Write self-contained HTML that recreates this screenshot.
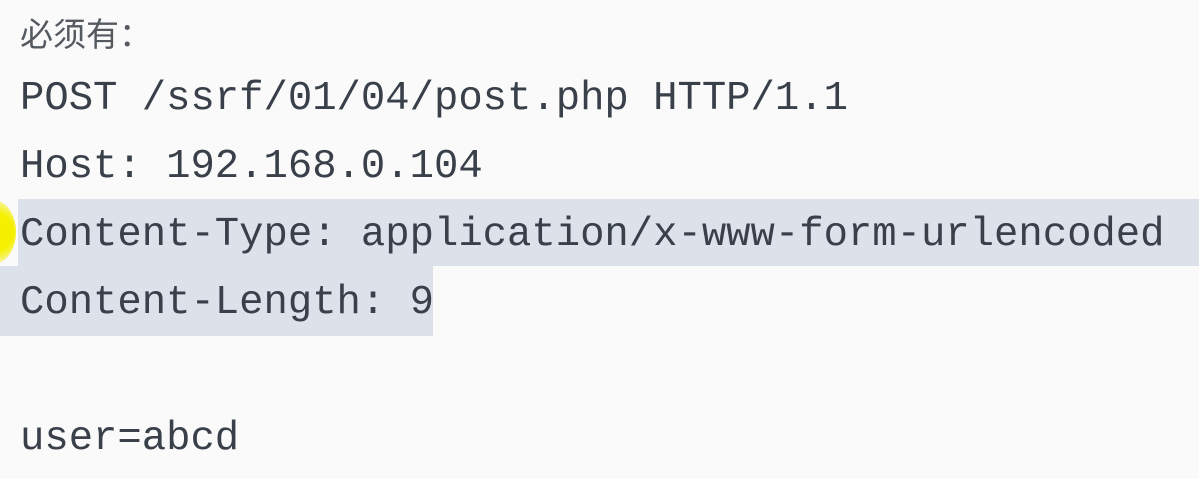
<!DOCTYPE html>
<html><head><meta charset="utf-8"><style>
html,body{margin:0;padding:0;background:#fafafa;width:1199px;height:479px;overflow:hidden;position:relative}
.l{position:absolute;left:20px;font-family:"Liberation Mono",monospace;font-size:40.6px;color:#39404a;line-height:68px;height:68px;white-space:pre}
.hl1{position:absolute;left:18px;top:199px;width:1181px;height:67px;background:#dde1ea}
.hl2{position:absolute;left:0;top:266px;width:433px;height:70px;background:#dde1ea}
.dot{position:absolute;left:-30px;top:200px;width:46px;height:64px;border-radius:50%;background:radial-gradient(circle,#f5f000 50%,#f7f59a 80%,rgba(250,250,250,0) 100%)}
.h{position:absolute;left:20px;top:10px;font-family:"Noto Sans CJK SC",sans-serif;font-size:33px;color:#555a61;line-height:44px}
</style></head><body>
<div class="hl1"></div><div class="hl2"></div><div class="dot"></div>
<div class="h">必须有：</div>
<div class="l" style="top:65px">POST /ssrf/01/04/post.php HTTP/1.1</div>
<div class="l" style="top:133px">Host: 192.168.0.104</div>
<div class="l" style="top:201px">Content-Type: application/x-www-form-urlencoded</div>
<div class="l" style="top:269px">Content-Length: 9</div>
<div class="l" style="top:405px">user=abcd</div>
</body></html>
